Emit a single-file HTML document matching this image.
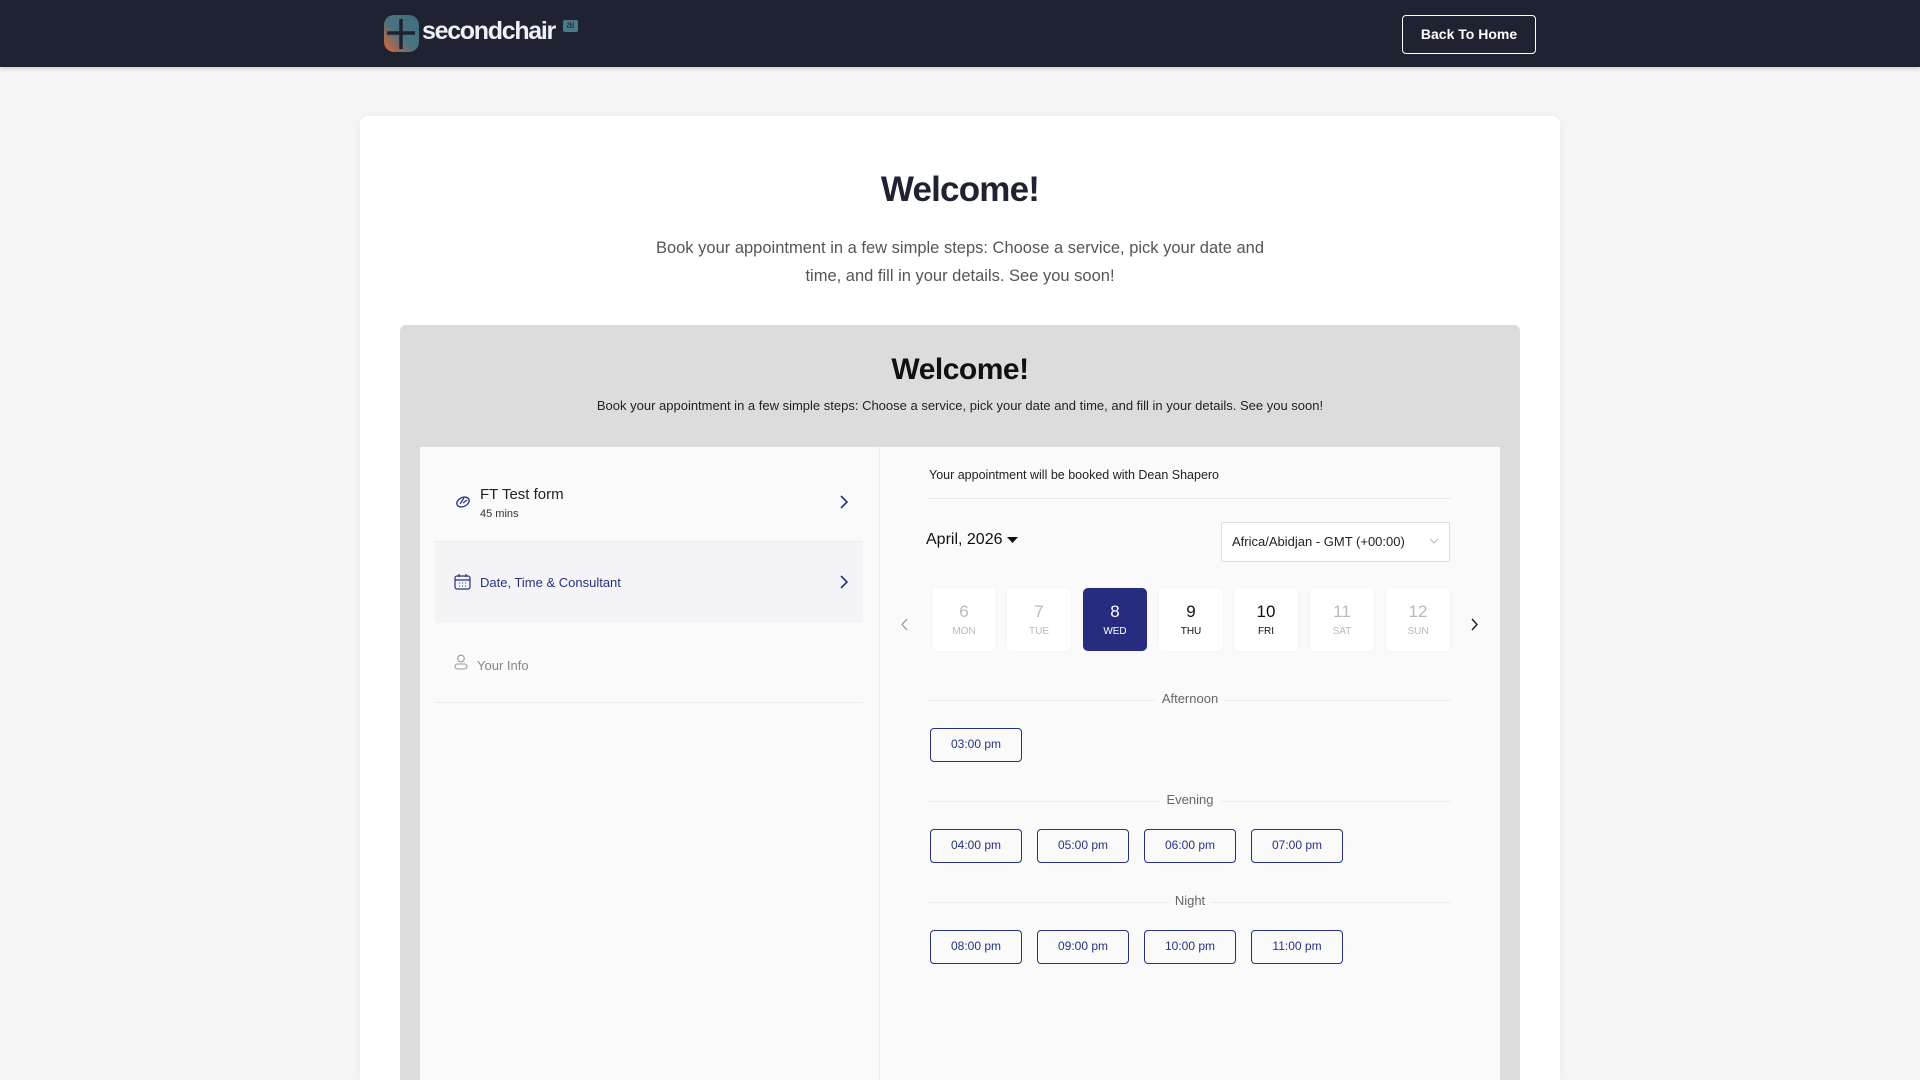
<!DOCTYPE html>
<html style="width:1920px;height:1080px;overflow:hidden"><head><meta charset="utf-8"><style>
*{box-sizing:border-box;margin:0;padding:0}
body{width:1920px;height:1080px;overflow:hidden;background:#f5f5f6;font-family:"Liberation Sans",sans-serif;position:relative}
.a{position:absolute}
.hdr{left:0;top:0;width:1920px;height:67px;background:#1f2231;box-shadow:0 2px 4px rgba(0,0,0,.15)}
.btn{left:1402px;top:15px;width:134px;height:39px;border:1px solid #fff;border-radius:4px;color:#fff;font-size:14px;font-weight:bold;text-align:center;line-height:37px}
.card{left:360px;top:116px;width:1200px;height:964px;background:#fff;border-radius:8px 8px 0 0;box-shadow:0 0 8px rgba(0,0,0,.05)}
.c{text-align:center;width:100%;left:0}
.gray{left:400px;top:325px;width:1120px;height:755px;background:#dcdcdc;border-radius:6px 6px 0 0}
.inner{left:420px;top:447px;width:1080px;height:633px;background:#fafafa}
.day{width:64px;height:63px;top:588px;background:#fff;border-radius:5px;text-align:center;box-shadow:0 0 3px rgba(0,0,0,.04)}
.day b{display:block;font-weight:normal;font-size:17px;margin-top:14px}
.day i{display:block;font-style:normal;font-size:10px;margin-top:4px}
.g{color:#b9b9b9}
.slot{width:92px;height:34px;border:1.5px solid #283182;border-radius:4px;color:#283182;font-size:12px;text-align:center;line-height:31px}
.ln{height:1px;background:#ebebeb;left:929px;width:522px}
.lbl{background:#fafafa;color:#666;font-size:13px;padding:0 7px;transform:translateX(-50%);line-height:22px}
</style></head><body>
<div class="a hdr"></div>
<svg class="a" style="left:383px;top:14px" width="38" height="40" viewBox="0 0 38 40"><defs><linearGradient id="lg" x1="0" y1="1" x2="1" y2="0"><stop offset="0" stop-color="#e8632e"/><stop offset=".45" stop-color="#4a7380"/><stop offset="1" stop-color="#3f6c7b"/></linearGradient></defs><rect x="1" y="1" width="35" height="37" rx="10" fill="url(#lg)"/><path d="M18 5V35M4 19H32" stroke="#1f2231" stroke-width="3.5"/></svg>
<div class="a" style="left:422px;top:17px;color:#eef0f5;font-size:25px;font-weight:bold;letter-spacing:-1.3px">secondchair</div>
<div class="a" style="left:563px;top:20px;width:15px;height:12px;background:#4a7a88;border-radius:2px;color:#1f2231;font-size:10px;line-height:11px;text-align:center">ai</div>
<div class="a btn">Back To Home</div>
<div class="a card"></div>
<div class="a c" style="top:170px;font-size:35px;font-weight:bold;color:#1f2231;letter-spacing:-.8px">Welcome!</div>
<div class="a c" style="top:234px;font-size:16.5px;color:#555;line-height:28px">Book your appointment in a few simple steps: Choose a service, pick your date and<br>time, and fill in your details. See you soon!</div>
<div class="a gray"></div>
<div class="a c" style="top:353px;font-size:30px;font-weight:bold;color:#111;letter-spacing:-.5px">Welcome!</div>
<div class="a c" style="top:398px;font-size:13px;color:#222">Book your appointment in a few simple steps: Choose a service, pick your date and time, and fill in your details. See you soon!</div>
<div class="a inner"></div>
<div class="a" style="left:879px;top:447px;width:1px;height:633px;background:#ececec"></div>
<svg class="a" style="left:455px;top:494px" width="16" height="14" viewBox="0 0 16 14"><ellipse cx="8" cy="8" rx="6.5" ry="4.5" fill="none" stroke="#283182" stroke-width="1.3" transform="rotate(-25 8 8)"/><path d="M5 10 9 4M8 9 12 6" stroke="#283182" stroke-width="1.2"/></svg>
<div class="a" style="left:480px;top:486px;font-size:15px;color:#222">FT Test form</div>
<div class="a" style="left:480px;top:508px;font-size:11px;color:#333">45 mins</div>
<svg class="a" style="left:839px;top:494px" width="10" height="16"><path d="M2 2 8 8 2 14" fill="none" stroke="#283182" stroke-width="1.6"/></svg>
<div class="a" style="left:435px;top:541px;width:428px;height:1px;background:#ececec"></div>
<div class="a" style="left:435px;top:542px;width:428px;height:81px;background:#f4f4f7"></div>
<svg class="a" style="left:454px;top:574px" width="17" height="16" viewBox="0 0 17 16"><rect x="1" y="2" width="15" height="13" rx="2" fill="none" stroke="#283182" stroke-width="1.2"/><path d="M1 6H16M5 0V3M12 0V3" stroke="#283182" stroke-width="1.2"/><path d="M5 9h1M8 9h1M11 9h1M5 12h1M8 12h1M11 12h1" stroke="#283182"/></svg>
<div class="a" style="left:480px;top:575px;font-size:13px;color:#283182">Date, Time &amp; Consultant</div>
<svg class="a" style="left:839px;top:574px" width="10" height="16"><path d="M2 2 8 8 2 14" fill="none" stroke="#283182" stroke-width="1.6"/></svg>
<svg class="a" style="left:454px;top:654px" width="14" height="16" viewBox="0 0 14 16"><circle cx="7" cy="4.5" r="3.3" fill="none" stroke="#999" stroke-width="1.1"/><rect x="1" y="10" width="12" height="5" rx="2.5" fill="none" stroke="#999" stroke-width="1.1"/></svg>
<div class="a" style="left:477px;top:658px;font-size:13px;color:#888">Your Info</div>
<div class="a" style="left:435px;top:702px;width:428px;height:1px;background:#ececec"></div>
<div class="a" style="left:929px;top:468px;font-size:12.5px;color:#222">Your appointment will be booked with Dean Shapero</div>
<div class="a" style="left:929px;top:498px;width:522px;height:1px;background:#e8e8e8"></div>
<div class="a" style="left:926px;top:531px;font-size:16px;color:#111">April, 2026</div>
<svg class="a" style="left:1007px;top:537px" width="11" height="7"><path d="M0 0H11L5.5 6Z" fill="#111"/></svg>
<div class="a" style="left:1221px;top:522px;width:229px;height:40px;background:#fff;border:1px solid #ddd;border-radius:2px;font-size:13px;color:#222;line-height:38px;padding-left:10px">Africa/Abidjan - GMT (+00:00)</div>
<svg class="a" style="left:1429px;top:538px" width="10" height="7"><path d="M1 1 5 5 9 1" fill="none" stroke="#bbb"/></svg>
<svg class="a" style="left:901px;top:618px" width="8" height="13"><path d="M6 1 1 6.5 6 12" fill="none" stroke="#999" stroke-width="1.3"/></svg>
<svg class="a" style="left:1470px;top:618px" width="8" height="13"><path d="M2 1 7 6.5 2 12" fill="none" stroke="#222" stroke-width="1.5"/></svg>
<div class="a day g" style="left:932px"><b>6</b><i>MON</i></div>
<div class="a day g" style="left:1007px"><b>7</b><i>TUE</i></div>
<div class="a day" style="left:1083px;background:#272c7e;color:#fff"><b>8</b><i>WED</i></div>
<div class="a day" style="left:1159px;color:#111"><b>9</b><i>THU</i></div>
<div class="a day" style="left:1234px;color:#111"><b>10</b><i>FRI</i></div>
<div class="a day g" style="left:1310px"><b>11</b><i>SAT</i></div>
<div class="a day g" style="left:1386px"><b>12</b><i>SUN</i></div>
<div class="a ln" style="top:700px"></div><div class="a lbl" style="left:1190px;top:688px">Afternoon</div>
<div class="a slot" style="left:930px;top:728px">03:00 pm</div>
<div class="a ln" style="top:801px"></div><div class="a lbl" style="left:1190px;top:789px">Evening</div>
<div class="a slot" style="left:930px;top:829px">04:00 pm</div>
<div class="a slot" style="left:1037px;top:829px">05:00 pm</div>
<div class="a slot" style="left:1144px;top:829px">06:00 pm</div>
<div class="a slot" style="left:1251px;top:829px">07:00 pm</div>
<div class="a ln" style="top:902px"></div><div class="a lbl" style="left:1190px;top:890px">Night</div>
<div class="a slot" style="left:930px;top:930px">08:00 pm</div>
<div class="a slot" style="left:1037px;top:930px">09:00 pm</div>
<div class="a slot" style="left:1144px;top:930px">10:00 pm</div>
<div class="a slot" style="left:1251px;top:930px">11:00 pm</div>
</body></html>
